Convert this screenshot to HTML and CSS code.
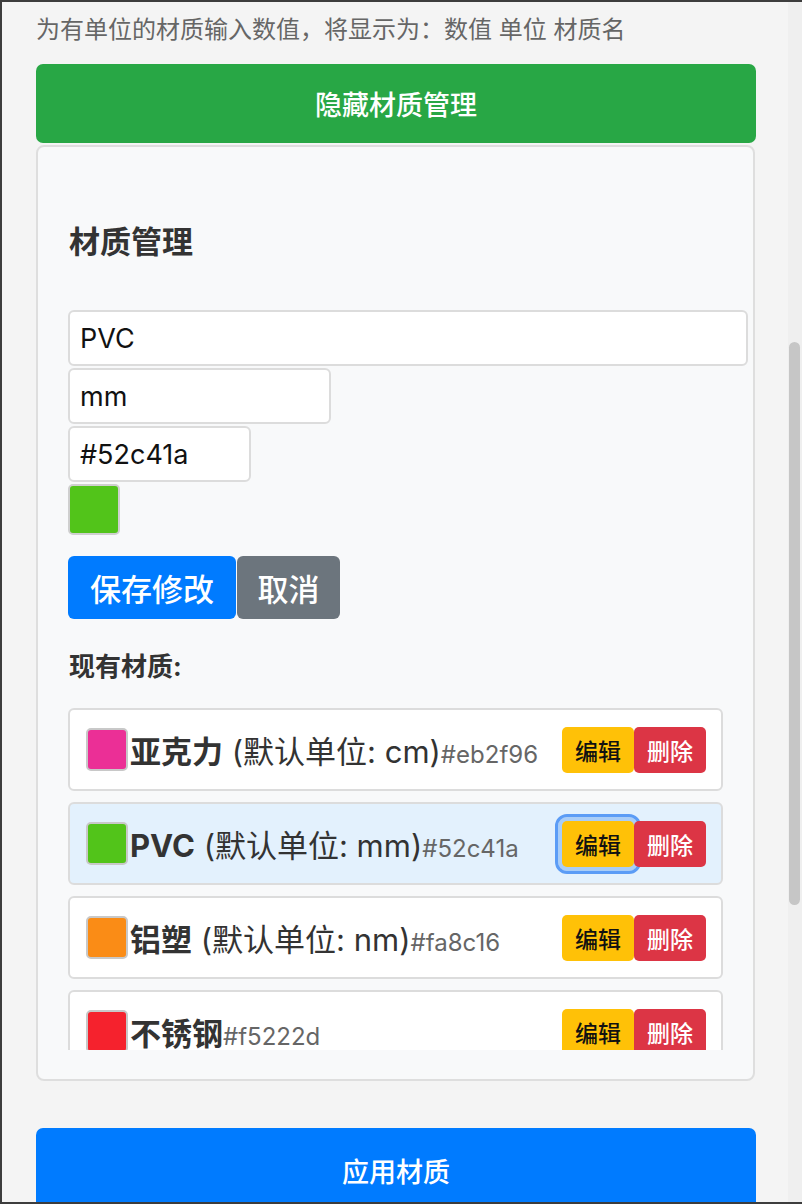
FILE: index.html
```html
<!DOCTYPE html>
<html lang="zh-CN">
<head>
<meta charset="utf-8">
<title>材质管理</title>
<link rel="stylesheet" href="styles.css">
</head>
<body>
<div class="frame">
  <div class="content">
    <p class="hint">为有单位的材质输入数值，将显示为：数值 单位 材质名</p>
    <button class="btn-block btn-green">隐藏材质管理</button>
    <section class="panel">
      <h3 class="panel-title">材质管理</h3>
      <div class="form">
        <input class="field field-name" type="text" value="PVC">
        <input class="field field-unit" type="text" value="mm">
        <input class="field field-hex" type="text" value="#52c41a">
        <div class="color-pick"></div>
        <div class="form-actions">
          <button class="btn btn-save">保存修改</button>
          <button class="btn btn-cancel">取消</button>
        </div>
      </div>
      <h4 class="list-title">现有材质:</h4>
      <div class="list">
        <div class="item">
          <span class="sw sw-pink"></span>
          <span class="label"><b class="name">亚克力</b><span class="unit"> (默认单位: cm)</span><span class="hex">#eb2f96</span></span>
          <span class="item-actions"><button class="sbtn sbtn-edit">编辑</button><button class="sbtn sbtn-del">删除</button></span>
        </div>
        <div class="item item-active">
          <span class="sw sw-green"></span>
          <span class="label"><b class="name">PVC</b><span class="unit"> (默认单位: mm)</span><span class="hex">#52c41a</span></span>
          <span class="item-actions"><button class="sbtn sbtn-edit sbtn-focus">编辑</button><button class="sbtn sbtn-del">删除</button></span>
        </div>
        <div class="item">
          <span class="sw sw-orange"></span>
          <span class="label"><b class="name">铝塑</b><span class="unit"> (默认单位: nm)</span><span class="hex">#fa8c16</span></span>
          <span class="item-actions"><button class="sbtn sbtn-edit">编辑</button><button class="sbtn sbtn-del">删除</button></span>
        </div>
        <div class="item">
          <span class="sw sw-red"></span>
          <span class="label"><b class="name">不锈钢</b><span class="hex">#f5222d</span></span>
          <span class="item-actions"><button class="sbtn sbtn-edit">编辑</button><button class="sbtn sbtn-del">删除</button></span>
        </div>
      </div>
    </section>
    <button class="btn-block btn-blue">应用材质</button>
  </div>
  <div class="scrollbar"><div class="thumb"></div></div>
</div>
</body>
</html>
```

FILE: styles.css
```css
html, body {
  margin: 0;
  padding: 0;
  height: 1204px;
  overflow: hidden;
  background: #f4f4f4;
  font-family: "Inter", "Noto Sans CJK SC", sans-serif;
}

.frame {
  box-sizing: border-box;
  height: 1204px;
  display: flex;
  border-top: 2px solid #3d3d3d;
  border-bottom: 2px solid #3d3d3d;
  border-left: 2px solid #3d3d3d;
}

.content {
  flex: 1;
  overflow: hidden;
  padding: 0 32px 0 34px;
  background: #f4f4f4;
}

.scrollbar {
  width: 14px;
  background: #efefef;
  display: flex;
  flex-direction: column;
}

.thumb {
  margin: 340px 2px 0 1px;
  height: 563px;
  border-radius: 6px;
  background: #c6c6c6;
}

.hint {
  margin: 12px 0 18px;
  font-size: 24px;
  line-height: 32px;
  color: #666;
}

.btn-block {
  display: block;
  width: 720px;
  border: none;
  border-radius: 7px;
  color: #fff;
  font-family: inherit;
  font-size: 27px;
  font-weight: 500;
  padding: 0;
}

.btn-green {
  height: 79px;
  background: #28a745;
}

.btn-blue {
  height: 84px;
  margin-top: 47px;
  background: #007bff;
}

.panel {
  margin-top: 2px;
  width: 719px;
  box-sizing: border-box;
  background: #f8f9fa;
  border: 2px solid #dedede;
  border-radius: 8px;
  padding: 31px 30px 29px 30px;
}

.panel-title {
  margin: 45px 0 50px 1px;
  font-size: 31px;
  line-height: 37px;
  font-weight: 700;
  color: #333;
}

.form {
  display: flex;
  flex-direction: column;
  align-items: flex-start;
  gap: 2px;
}

.field {
  box-sizing: border-box;
  height: 56px;
  border: 2px solid #dcdcdc;
  border-radius: 6px;
  background: #fff;
  padding: 0 10px;
  font-family: inherit;
  font-size: 27px;
  color: #111;
}

.field-name { width: 680px; }
.field-unit { width: 263px; }
.field-hex { width: 183px; }

.color-pick {
  box-sizing: border-box;
  width: 52px;
  height: 51px;
  border: 2px solid #cfcfcf;
  border-radius: 5px;
  background: #52c41a;
}

.form-actions {
  display: flex;
  margin-top: 19px;
}

.btn {
  height: 63px;
  border: none;
  border-radius: 6px;
  padding: 0 20px;
  font-family: inherit;
  font-size: 31px;
  font-weight: 500;
  color: #fff;
}

.btn-save { background: #007bff; width: 168px; }
.btn-cancel { background: #6c757d; width: 103px; margin-left: 1px; }

.list-title {
  margin: 32px 0 25px 1px;
  font-size: 26px;
  line-height: 32px;
  font-weight: 700;
  color: #333;
}

.list {
  height: 342px;
  overflow: hidden;
  display: flex;
  flex-direction: column;
  gap: 11px;
}

.item {
  flex: none;
  box-sizing: border-box;
  height: 83px;
  display: flex;
  align-items: center;
  padding: 0 15px 0 16px;
  background: #fff;
  border: 2px solid #dcdcdc;
  border-radius: 6px;
}

.item-active {
  background: #e3f1fd;
}

.sw {
  box-sizing: border-box;
  width: 42px;
  height: 43px;
  border: 2px solid #c8c8c8;
  border-radius: 5px;
  margin-right: 2px;
}

.sw-pink { background: #eb2f96; }
.sw-green { background: #52c41a; }
.sw-orange { background: #fa8c16; }
.sw-red { background: #f5222d; }

.label {
  color: #333;
  white-space: nowrap;
}

.name {
  font-size: 31px;
  font-weight: 700;
}

.unit {
  font-size: 31px;
}

.hex {
  font-size: 24px;
  color: #666;
}

.item-actions {
  margin-left: auto;
  display: flex;
}

.sbtn {
  height: 46px;
  width: 72px;
  border: none;
  border-radius: 5px;
  padding: 0;
  font-family: inherit;
  font-size: 23px;
  font-weight: 500;
}

.sbtn-edit { background: #ffc107; color: #111; }
.sbtn-del { background: #dc3545; color: #fff; }

.sbtn-focus {
  box-shadow: 0 0 0 4px #a9cdf7;
  outline: 3px solid #5b9cf6;
  outline-offset: 4px;
  border-radius: 5px;
}
```
